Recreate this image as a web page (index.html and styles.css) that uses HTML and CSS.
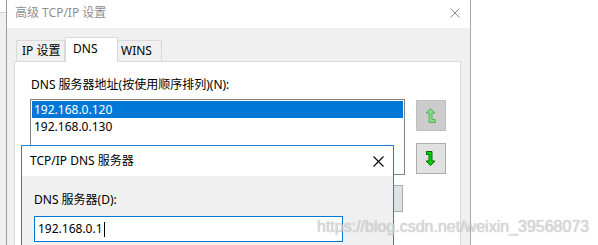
FILE: index.html
```html
<!DOCTYPE html>
<html lang="zh-CN">
<head>
<meta charset="utf-8">
<title>高级 TCP/IP 设置</title>
<link rel="stylesheet" href="styles.css">
</head>
<body>
<div class="bg-strip"><div class="bg-strip-top"></div></div>
<div class="window">
  <div class="titlebar">
    <span class="title">高级 TCP/IP 设置</span>
    <svg class="close gray" width="10" height="10" viewBox="0 0 10 10"><path d="M0.5 0.5L9.5 9.5M9.5 0.5L0.5 9.5" stroke="#8c8c8c" stroke-width="1"/></svg>
  </div>
  <div class="win-body">
    <div class="tabs">
      <div class="tab tab-ip">IP 设置</div>
      <div class="tab tab-dns active">DNS</div>
      <div class="tab tab-wins">WINS</div>
    </div>
    <div class="panel">
      <div class="label">DNS 服务器地址(按使用顺序排列)(N):</div>
      <div class="list-row">
        <div class="listbox">
          <div class="item selected">192.168.0.120</div>
          <div class="item">192.168.0.130</div>
        </div>
        <div class="arrows">
          <div class="arrow-btn disabled">
            <svg width="11" height="16" viewBox="0 0 11 16"><path d="M4.5 0.5L9 5H6V11.5H9.5V14.5H3V5H0Z" fill="#86d886" stroke="#56b456" stroke-width="1" stroke-linejoin="miter"/></svg>
          </div>
          <div class="arrow-btn">
            <svg width="11" height="16" viewBox="0 0 11 16"><path d="M0.5 0.5H6V10H9L4.5 14.5L0 10H3V3.5H0.5Z" fill="#00d400" stroke="#006a00" stroke-width="1" stroke-linejoin="miter"/></svg>
          </div>
        </div>
      </div>
      <div class="btn-row">
        <div class="push-btn">删除(V)</div>
      </div>
    </div>
  </div>
</div>

<div class="dialog">
  <div class="dlg-titlebar">
    <span class="dlg-title">TCP/IP DNS 服务器</span>
    <svg class="close" width="11" height="11" viewBox="0 0 11 11"><path d="M0.5 0.5L10.5 10.5M10.5 0.5L0.5 10.5" stroke="#000" stroke-width="1.1"/></svg>
  </div>
  <div class="dlg-body">
    <div class="dlg-label">DNS 服务器(D):</div>
    <div class="input">192.168.0.1<span class="caret"></span></div>
  </div>
</div>

<div class="watermark">https://blog.csdn.net/weixin_39568073</div>
</body>
</html>
```

FILE: styles.css
```css
html, body {
  margin: 0;
  padding: 0;
}
body {
  width: 598px;
  height: 245px;
  overflow: hidden;
  background: #ffffff;
  display: flex;
  position: relative;
  font-family: "Noto Sans", "Noto Sans CJK SC", sans-serif;
  font-size: 12px;
  color: #000;
}
.bg-strip {
  width: 6px;
  background: #f0f0f0;
  flex: none;
}
.bg-strip-top {
  height: 12px;
  background: #fff;
  border-bottom: 1px solid #d4d4d4;
}
.window {
  width: 465px;
  height: 245px;
  box-sizing: border-box;
  border-left: 1px solid #9c9c9c;
  border-right: 1px solid #a8a8a8;
  display: flex;
  flex-direction: column;
  flex: none;
  overflow: hidden;
}
.titlebar {
  flex: none;
  height: 28px;
  background: #fff;
  display: flex;
  align-items: center;
  justify-content: space-between;
  padding: 0 10px 2px 8px;
  box-sizing: border-box;
}
.title {
  color: #8f8f8f;
  line-height: 16px;
}
.close {
  display: block;
}
.win-body {
  flex: 1;
  min-height: 0;
  background: #f0f0f0;
  padding-top: 9px;
}
.tabs {
  display: flex;
  align-items: flex-end;
  height: 24px;
  margin-left: 9px;
}
.tab {
  box-sizing: border-box;
  height: 21px;
  border: 1px solid #d9d9d9;
  border-bottom: none;
  background: #f0f0f0;
  display: flex;
  align-items: center;
  line-height: 16px;
}
.tab-ip {
  width: 49px;
  padding-left: 5px;
}
.tab-dns {
  width: 53px;
  padding-left: 7px;
}
.tab-wins {
  width: 44px;
  padding-left: 3px;
  border-left: none;
}
.tab.active {
  height: 25px;
  background: #fff;
  margin-bottom: -1px;
  position: relative;
  z-index: 1;
  padding-bottom: 3px;
}
.panel {
  margin-left: 7px;
  width: 447px;
  height: 184px;
  box-sizing: border-box;
  border: 1px solid #d9d9d9;
  border-bottom: none;
  background: #fff;
  padding: 15px 0 0 15px;
}
.label {
  line-height: 16px;
  margin-left: 1px;
}
.list-row {
  display: flex;
  margin-top: 6px;
}
.listbox {
  width: 375px;
  height: 76px;
  box-sizing: border-box;
  border: 1px solid #828282;
  padding: 1px;
}
.item {
  height: 17px;
  line-height: 17px;
  padding-left: 2px;
}
.item.selected {
  background: #0078d7;
  color: #fff;
}
.arrows {
  margin-left: 11px;
  margin-top: 1px;
  display: flex;
  flex-direction: column;
  gap: 12px;
}
.arrow-btn {
  width: 30px;
  height: 31px;
  box-sizing: border-box;
  border: 1px solid #adadad;
  background: #e1e1e1;
  display: flex;
  align-items: center;
  justify-content: center;
}
.arrow-btn.disabled {
  background: #cccccc;
  border-color: #bfbfbf;
}
.btn-row {
  width: 375px;
  display: flex;
  justify-content: flex-end;
  margin-top: 10px;
}
.push-btn {
  width: 75px;
  height: 27px;
  margin-right: 2px;
  box-sizing: border-box;
  border: 1px solid #adadad;
  background: #e1e1e1;
  display: flex;
  align-items: center;
  justify-content: center;
}
.dialog {
  position: absolute;
  left: 21px;
  top: 145px;
  width: 373px;
  height: 100px;
  box-sizing: border-box;
  border: 1px solid #1b80d6;
  border-bottom: none;
  background: #f0f0f0;
  z-index: 5;
}
.dlg-titlebar {
  height: 30px;
  background: #fff;
  display: flex;
  align-items: center;
  justify-content: space-between;
  padding: 0 9px 0 8px;
}
.dlg-title {
  line-height: 16px;
}
.dlg-body {
  padding: 16px 12px 0 12px;
}
.dlg-label {
  line-height: 16px;
}
.input {
  margin-top: 8px;
  width: 309px;
  height: 26px;
  box-sizing: border-box;
  border: 1px solid #0078d7;
  background: #fff;
  padding-left: 3px;
  display: flex;
  align-items: center;
  line-height: 16px;
}
.caret {
  display: inline-block;
  width: 1px;
  height: 15px;
  background: #000;
  margin-left: 1px;
}
.watermark {
  position: absolute;
  left: 317px;
  top: 217px;
  z-index: 10;
  font-family: "Liberation Sans", Arial, sans-serif;
  font-size: 16px;
  line-height: 20px;
  color: rgba(225, 225, 225, 0.75);
  text-shadow: 0 0 1px rgba(110, 110, 110, 0.55);
  white-space: nowrap;
}
```
